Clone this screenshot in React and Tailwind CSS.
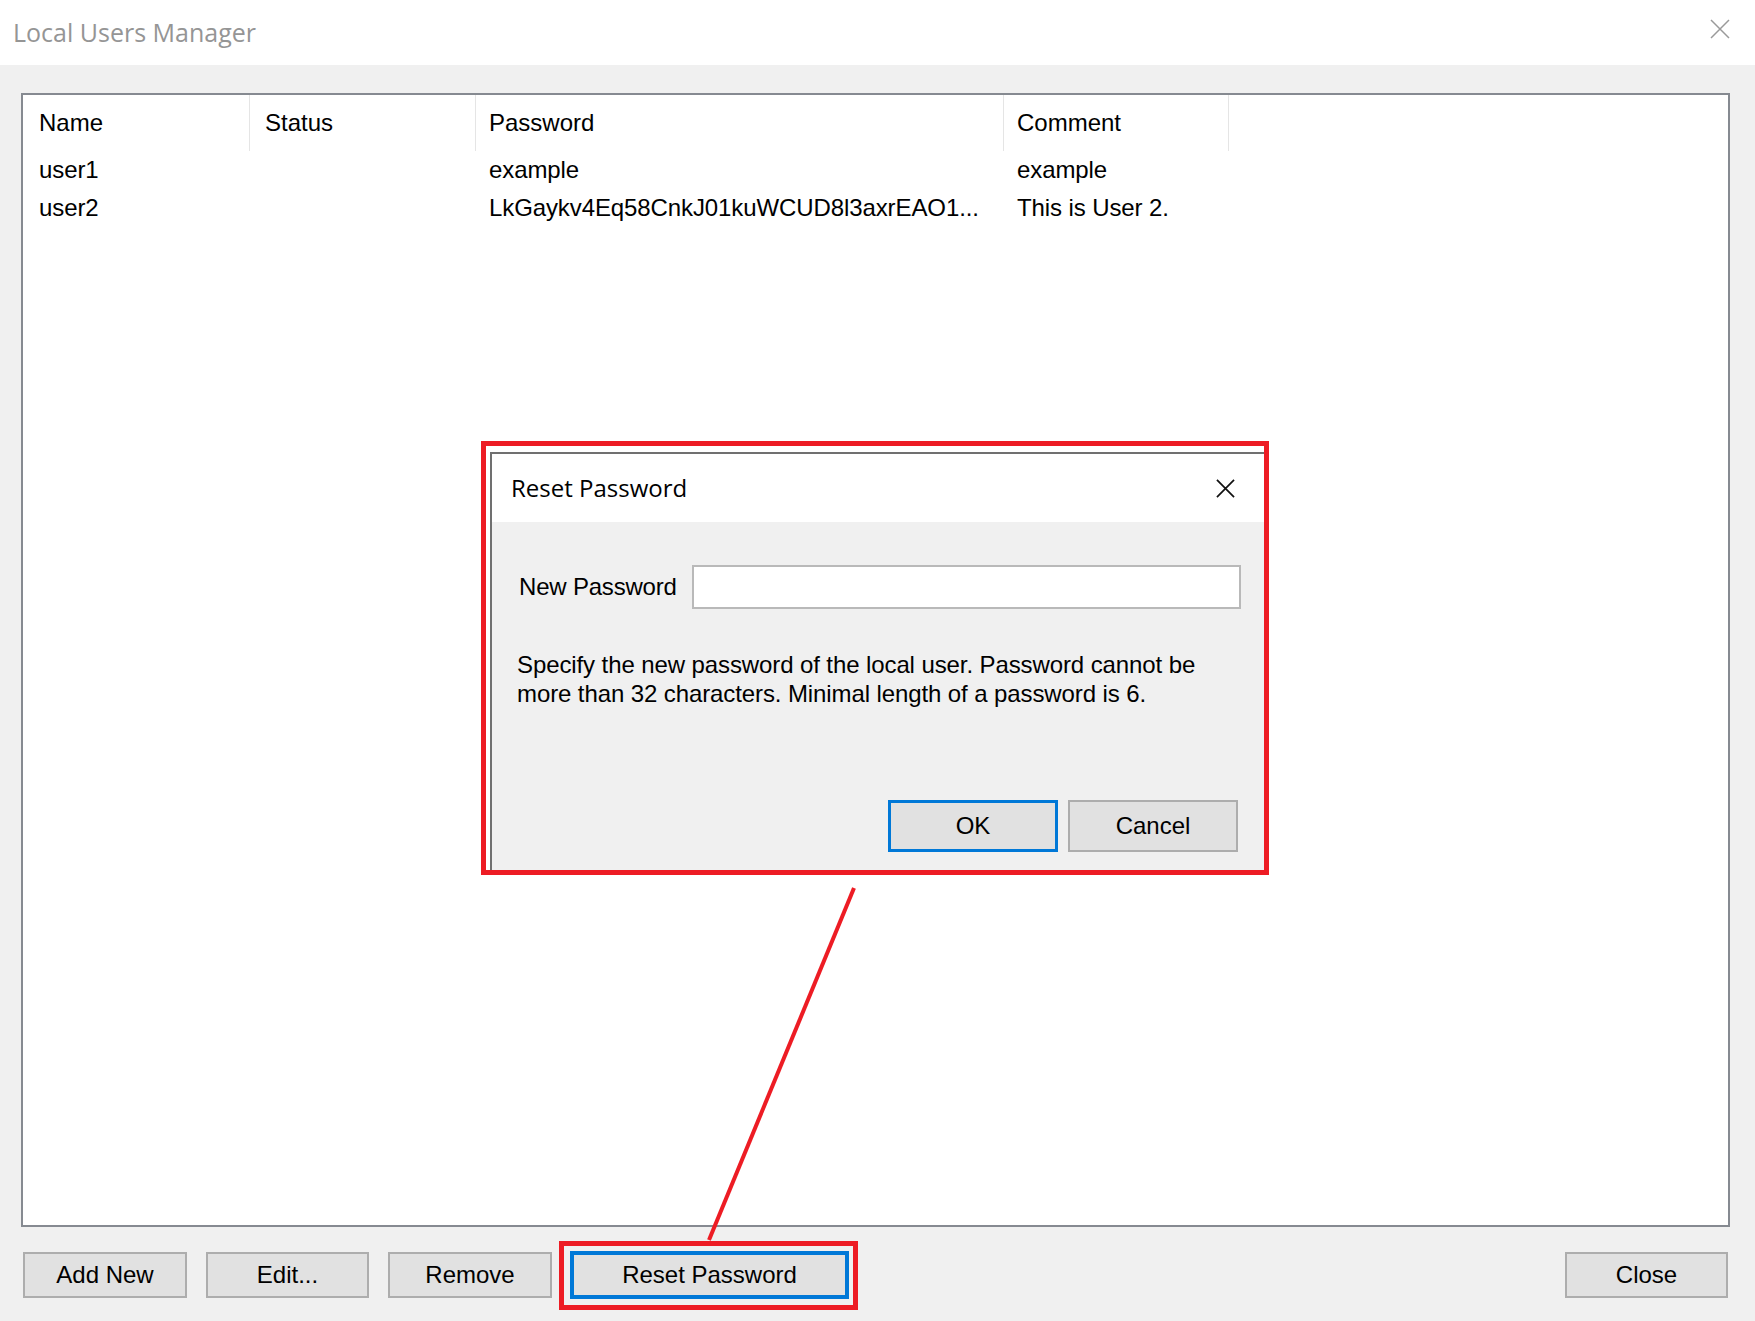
import React from 'react';

const users = [
  { name: 'user1', status: '', password: 'example', comment: 'example' },
  { name: 'user2', status: '', password: 'LkGaykv4Eq58CnkJ01kuWCUD8l3axrEAO1...', comment: 'This is User 2.' },
];

const columns = [
  { key: 'name', label: 'Name', width: 'w-[227px]', pad: 'pl-[16px]' },
  { key: 'status', label: 'Status', width: 'w-[226px]', pad: 'pl-[15px]' },
  { key: 'password', label: 'Password', width: 'w-[528px]', pad: 'pl-[13px]' },
  { key: 'comment', label: 'Comment', width: 'w-[225px]', pad: 'pl-[13px]' },
];

const XIcon = ({ size = 20, color = '#000', stroke = 1.6 }) => (
  <svg width={size} height={size} viewBox="0 0 20 20" fill="none">
    <path d="M1 1 L19 19 M19 1 L1 19" stroke={color} strokeWidth={stroke} />
  </svg>
);

// plain win32 push button
const WinButton = ({ children, className = '' }) => (
  <div
    className={`flex items-center justify-center bg-[#e1e1e1] text-[24px] text-black ${className}`}
  >
    {children}
  </div>
);

const App = () => {
  return (
    <div className="relative w-[1755px] h-[1321px] bg-[#f0f0f0] flex flex-col overflow-hidden font-['Liberation_Sans',Arial,sans-serif]">
      {/* title bar */}
      <div className="h-[65px] shrink-0 bg-white flex items-center justify-between pl-[13px] pr-[25px]">
        <span className="text-[25px] text-[#959595] font-['Open_Sans',sans-serif]">Local Users Manager</span>
        <div className="mb-[7px]">
          <XIcon size={20} color="#9a9a9a" stroke={1.5} />
        </div>
      </div>

      {/* users list */}
      <div className="pl-[21px] pr-[25px] pt-[28px]">
        <div className="h-[1134px] border-2 border-[#868a91] bg-white">
          <div className="flex h-[56px]">
            {columns.map((c) => (
              <div
                key={c.key}
                className={`${c.width} ${c.pad} flex items-center border-r border-[#e5e5e5] text-[24px] text-black`}
              >
                {c.label}
              </div>
            ))}
          </div>
          {users.map((u) => (
            <div key={u.name} className="flex h-[38px]">
              {columns.map((c) => (
                <div
                  key={c.key}
                  className={`${c.width} ${c.pad} flex items-center text-[24px] tracking-[-0.1px] text-black whitespace-nowrap`}
                >
                  {u[c.key]}
                </div>
              ))}
            </div>
          ))}
        </div>
      </div>

      {/* bottom buttons */}
      <div className="mt-[24px] flex items-center pl-[23px] pr-[27px]">
        <WinButton className="w-[164px] h-[46px] border-2 border-[#adadad]">Add New</WinButton>
        <WinButton className="ml-[19px] w-[163px] h-[46px] border-2 border-[#adadad]">Edit...</WinButton>
        <WinButton className="ml-[19px] w-[164px] h-[46px] border-2 border-[#adadad]">Remove</WinButton>
        <div className="relative ml-[18px]">
          <WinButton className="w-[279px] h-[48px] border-4 border-[#0078d7]">Reset Password</WinButton>
          <div className="absolute left-[-11px] right-[-9px] top-[-10px] bottom-[-11px] border-[5px] border-[#ed1c24]"></div>
        </div>
        <WinButton className="ml-auto w-[163px] h-[46px] border-2 border-[#adadad]">Close</WinButton>
      </div>

      {/* annotation arrow line */}
      <svg className="absolute inset-0 pointer-events-none" width="1755" height="1321">
        <line x1="854" y1="888" x2="709" y2="1240" stroke="#ed1c24" strokeWidth="4" />
      </svg>

      {/* highlighted Reset Password dialog */}
      <div className="absolute left-[481px] top-[441px] w-[788px] h-[434px] border-[5px] border-[#ed1c24] pt-[6px] pl-[4px] flex">
        <div className="flex-1 flex flex-col border-l-2 border-t-2 border-[#707070]">
          <div className="h-[68px] shrink-0 bg-white flex items-center justify-between pl-[19px] pr-[29px]">
            <span className="text-[24px] text-black font-['Open_Sans',sans-serif]">Reset Password</span>
            <XIcon size={19} color="#111" stroke={1.8} />
          </div>
          <div className="flex-1 bg-[#f0f0f0] flex flex-col">
            <div className="mt-[43px] flex items-center justify-between pl-[27px] pr-[23px]">
              <span className="text-[24px] tracking-[-0.2px] text-black">New Password</span>
              <div className="w-[549px] h-[44px] bg-white border-2 border-[#b9b9b9]"></div>
            </div>
            <p className="mt-[41px] pl-[25px] text-[24px] leading-[29px] tracking-[-0.1px] text-black">
              Specify the new password of the local user. Password cannot be
              <br />
              more than 32 characters. Minimal length of a password is 6.
            </p>
            <div className="mt-auto flex justify-end gap-[10px] pr-[26px] pb-[18px]">
              <WinButton className="w-[170px] h-[52px] border-[3px] border-[#0078d7]">OK</WinButton>
              <WinButton className="w-[170px] h-[52px] border-2 border-[#adadad]">Cancel</WinButton>
            </div>
          </div>
        </div>
      </div>
    </div>
  );
};

export default App;
